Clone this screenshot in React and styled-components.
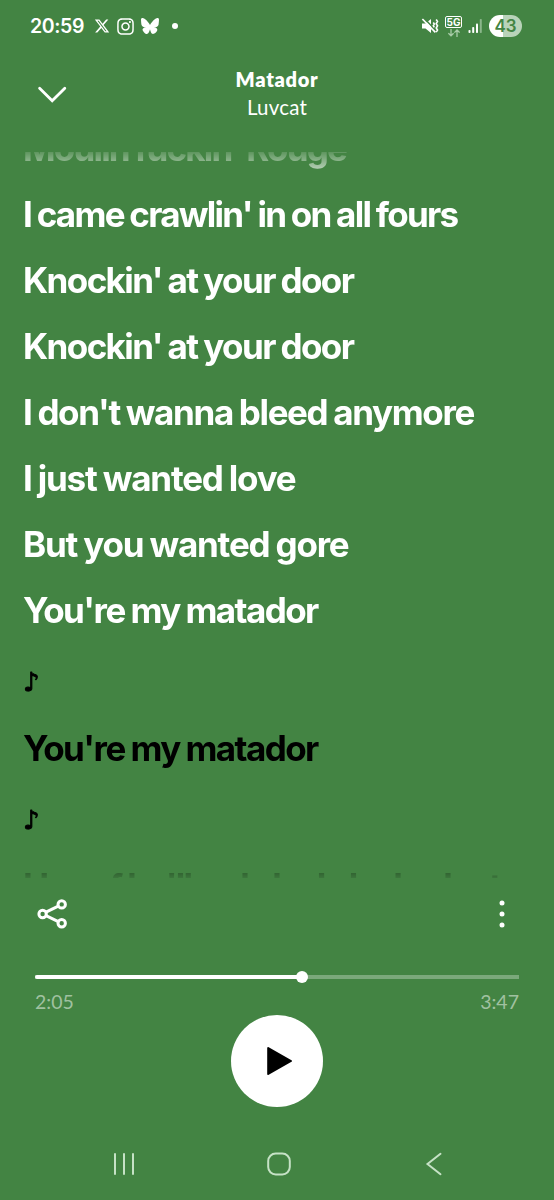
import React from 'react'
import styled, { createGlobalStyle } from 'styled-components';
import { FaXTwitter, FaInstagram, FaBluesky } from 'react-icons/fa6';

const lines = [
  { text: "Moulin fuckin' Rouge", spacing: -1.8 },
  { text: "I came crawlin' in on all fours", spacing: -1.73 },
  { text: "Knockin' at your door", spacing: -1.6 },
  { text: "Knockin' at your door", spacing: -1.6 },
  { text: "I don't wanna bleed anymore", spacing: -1.36 },
  { text: "I just wanted love", spacing: -1.2 },
  { text: "But you wanted gore", spacing: -1.2 },
  { text: "You're my matador", spacing: -1.57 },
  { text: "♪", note: true },
  { text: "You're my matador", spacing: -1.57, upcoming: true },
  { text: "♪", note: true },
  { text: "Has of he'll so la la da la da sleet", spacing: -1.7, upcoming: true },
];

const elapsed = 125;
const total = 227;

function StatusBar() {
  return (
    <Status>
      <Clock>20:59</Clock>
      <Apps>
        <FaXTwitter size={16} />
        <FaInstagram size={19} />
        <FaBluesky size={18} />
        <Dot />
      </Apps>
      <Signals>
        <svg width="18" height="18" viewBox="0 0 18 18" fill="none" stroke="#fff">
          <path d="M1 6.5h3.5L10 2v14l-5.5-4.5H1z" fill="#fff" stroke="none" />
          <path d="M2.6 .8l12 12.4" stroke="#438443" strokeWidth="1.6" />
          <path d="M1.4 2l13 13.4" strokeWidth="1.7" />
          <path d="M12.3 5.5l1 1.6-1 1.6 1 1.6M15.2 2.5l1.3 2-1.3 2.2 1.3 2.1-1.3 2.2 1.3 2.1-1.3 2" strokeWidth="1.6" />
        </svg>
        <Network>
          <NetworkLabel>5G</NetworkLabel>
          <svg width="12" height="8" viewBox="0 0 12 8" fill="none" stroke="#a9cda9" strokeWidth="1.3">
            <path d="M3 0v6.6M.4 4.2L3 6.8l2.6-2.6M9 8V1M6.4 3.6L9 1l2.6 2.6" />
          </svg>
        </Network>
        <svg width="15" height="14" viewBox="0 0 15 14" fill="#fff">
          <rect x="0.5" y="11" width="2" height="3" rx="0.8" />
          <rect x="4.2" y="8" width="2" height="6" rx="0.8" />
          <rect x="8" y="4.5" width="2" height="9.5" rx="0.8" />
          <rect x="11.8" y="0" width="2" height="14" rx="0.8" fill="#8bb78b" />
        </svg>
        <Battery>43</Battery>
      </Signals>
    </Status>
  )
}

function App() {
  return (
    <Screen>
      <GlobalStyle />
      <StatusBar />
      <Header>
        <svg width="30" height="18" viewBox="0 0 30 18" fill="none" stroke="#fff" strokeWidth="2.8" strokeLinecap="round">
          <path d="M2.6 2.2L15.2 14.8 27.8 2.2" />
        </svg>
        <Track>
          <Title>Matador</Title>
          <Artist>Luvcat</Artist>
        </Track>
      </Header>
      <Lyrics>
        {lines.map((line, i) => line.note
          ? <Note key={i}>{line.text}</Note>
          : <Line key={i} $spacing={line.spacing} $upcoming={line.upcoming}>{line.text}</Line>
        )}
      </Lyrics>
      <Actions>
        <svg width="32" height="32" viewBox="0 0 32 32" fill="none" stroke="#fff" strokeWidth="3">
          <circle cx="5.6" cy="16" r="3.7" />
          <circle cx="24.7" cy="6.4" r="3.7" />
          <circle cx="24.7" cy="25.2" r="3.7" />
          <path d="M9 14.2l12.3-6M9 17.6l12.3 6" />
        </svg>
        <svg width="6" height="28" viewBox="0 0 6 28" fill="#fff">
          <circle cx="3" cy="3" r="2.5" />
          <circle cx="3" cy="14" r="2.5" />
          <circle cx="3" cy="25" r="2.5" />
        </svg>
      </Actions>
      <Bar>
        <Played style={{ width: `${(elapsed / total) * 100}%` }} />
        <Thumb />
      </Bar>
      <Times>
        <span>2:05</span>
        <span>3:47</span>
      </Times>
      <PlayButton>
        <svg width="28" height="30" viewBox="0 0 28 30">
          <path d="M2.2 2L25 15 2.2 28z" fill="#000" stroke="#000" strokeWidth="2" strokeLinejoin="round" />
        </svg>
      </PlayButton>
      <NavBar>
        <svg width="24" height="24" viewBox="0 0 24 24" stroke="#c6e2c6" strokeWidth="2" strokeLinecap="round">
          <path d="M3 2v20M12 2v20M21 2v20" />
        </svg>
        <svg width="24" height="24" viewBox="0 0 24 24" fill="none" stroke="#c6e2c6" strokeWidth="2">
          <rect x="1.2" y="1.5" width="21.6" height="21" rx="7.5" />
        </svg>
        <svg width="24" height="24" viewBox="0 0 24 24" fill="none" stroke="#c6e2c6" strokeWidth="2" strokeLinecap="round">
          <path d="M18.5 1.8L5.5 12l13 10.2" />
        </svg>
      </NavBar>
    </Screen>
  )
}

export default App

const GlobalStyle = createGlobalStyle`
  body {
    margin: 0;
    background: #438443;
  }
  * {
    box-sizing: border-box;
  }
  svg {
    display: block;
    flex-shrink: 0;
  }
`;

const Screen = styled.div`
  width: 554px;
  height: 1200px;
  display: flex;
  flex-direction: column;
  overflow: hidden;
  background: #438443;
  color: #FFFFFF;
  font-family: Lato, sans-serif;
`;

const Status = styled.div`
  height: 52px;
  display: flex;
  align-items: center;
  padding: 0 32px 0 30px;
`;

const Clock = styled.div`
  width: 64px;
  font-family: Inter, sans-serif;
  font-size: 19.5px;
  font-weight: 600;
  letter-spacing: -0.4px;
`;

const Apps = styled.div`
  display: flex;
  align-items: center;
  gap: 6px;
`;

const Dot = styled.div`
  width: 6px;
  height: 6px;
  margin-left: 7px;
  border-radius: 50%;
  background: #FFFFFF;
`;

const Signals = styled.div`
  display: flex;
  align-items: center;
  gap: 6px;
  margin-left: auto;
`;

const Network = styled.div`
  display: flex;
  flex-direction: column;
  align-items: center;
  gap: 1px;
`;

const NetworkLabel = styled.div`
  width: 17px;
  height: 12px;
  border: 1px solid #FFFFFF;
  border-radius: 2px;
  font-family: Inter, sans-serif;
  font-size: 10px;
  font-weight: 700;
  line-height: 10px;
  text-align: center;
`;

const Battery = styled.div`
  width: 33px;
  height: 22px;
  border-radius: 11px;
  background: linear-gradient(90deg, #FFFFFF 43%, #b9d3b9 43%);
  color: #438443;
  font-family: Inter, sans-serif;
  font-size: 17px;
  font-weight: 600;
  line-height: 22px;
  text-align: center;
`;

const Header = styled.div`
  height: 100px;
  display: grid;
  grid-template-columns: 70px 1fr 70px;
  align-items: start;
  padding: 13px 0 0;

  > svg {
    margin: 21px 0 0 37px;
  }
`;

const Track = styled.div`
  text-align: center;
  font-size: 20px;
  line-height: 28px;
`;

const Title = styled.div`
  font-weight: 800;
  letter-spacing: 0.7px;
`;

const Artist = styled.div`
  font-size: 20.5px;
  letter-spacing: 0.2px;
`;

const Lyrics = styled.div`
  height: 726px;
  display: flex;
  flex-direction: column;
  justify-content: flex-end;
  padding: 0 23px;
  overflow: hidden;
  mask-image: linear-gradient(
    rgba(0, 0, 0, 0.15) 0,
    #000 32px,
    #000 calc(100% - 32px),
    rgba(0, 0, 0, 0.1) 100%
  );

  > :last-child {
    margin-bottom: -41px;
  }
`;

const Line = styled.div`
  flex-shrink: 0;
  height: 66px;
  color: ${props => props.$upcoming ? '#000000' : '#FFFFFF'};
  font-family: Inter, sans-serif;
  font-size: 35px;
  font-weight: 700;
  line-height: 66px;
  letter-spacing: ${props => props.$spacing}px;
  word-spacing: -1px;
  white-space: nowrap;
`;

const Note = styled.div`
  flex-shrink: 0;
  height: 72px;
  color: #000000;
  font-family: "DejaVu Sans", sans-serif;
  font-size: 26px;
  line-height: 79px;
  -webkit-text-stroke: 0.9px #000000;
`;

const Actions = styled.div`
  height: 72px;
  display: flex;
  align-items: center;
  justify-content: space-between;
  padding: 0 49px 0 37px;
`;

const Bar = styled.div`
  height: 12px;
  margin: 21px 35px 0;
  display: flex;
  align-items: center;
  background: linear-gradient(#7ba97b, #7ba97b) center / 100% 4px no-repeat;
  border-radius: 2px;
`;

const Played = styled.div`
  height: 4px;
  border-radius: 2px;
  background: #FFFFFF;
`;

const Thumb = styled.div`
  width: 12px;
  height: 12px;
  margin-left: -6px;
  border-radius: 50%;
  background: #FFFFFF;
`;

const Times = styled.div`
  height: 32px;
  display: flex;
  justify-content: space-between;
  padding: 7px 35px 0;
  color: #a0c1a0;
  font-size: 19.5px;
  line-height: 24px;
`;

const PlayButton = styled.button`
  width: 92px;
  height: 92px;
  margin: 0 auto;
  display: flex;
  align-items: center;
  justify-content: center;
  border: none;
  border-radius: 50%;
  background: #FFFFFF;
  padding: 0 0 0 5px;
`;

const NavBar = styled.div`
  margin-top: 45px;
  height: 24px;
  display: flex;
  justify-content: space-between;
  padding: 0 108px 0 112px;
`;
